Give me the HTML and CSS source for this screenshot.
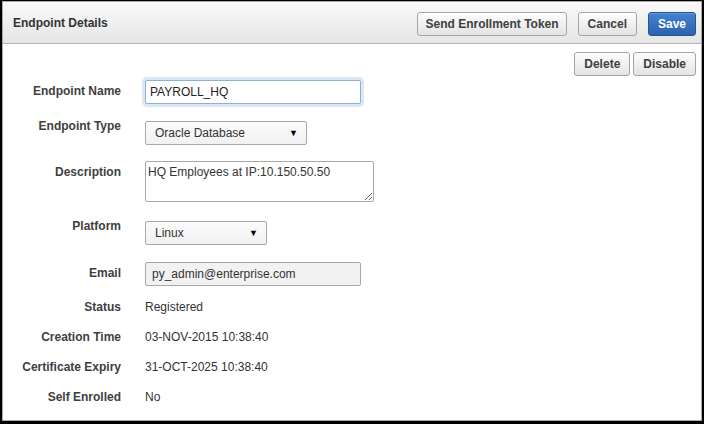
FILE: index.html
```html
<!DOCTYPE html>
<html>
<head>
<meta charset="utf-8">
<link rel="stylesheet" href="styles.css">
</head>
<body>
<div class="panel">
  <div class="header">
    <div class="title">Endpoint Details</div>
    <div class="actions">
      <button class="btn btn-wide">Send Enrollment Token</button>
      <button class="btn">Cancel</button>
      <button class="btn btn-primary">Save</button>
    </div>
  </div>
  <div class="body">
    <div class="toolbar">
      <button class="btn">Delete</button>
      <button class="btn">Disable</button>
    </div>
    <div class="form">
      <div class="row row-name">
        <div class="label label-text">Endpoint Name</div>
        <div class="field"><input class="input input-focus" type="text" value="PAYROLL_HQ"></div>
      </div>
      <div class="row row-type">
        <div class="label label-select">Endpoint Type</div>
        <div class="field"><div class="select select-type"><span>Oracle Database</span><span class="arrow">▼</span></div></div>
      </div>
      <div class="row row-desc">
        <div class="label label-text">Description</div>
        <div class="field"><textarea class="textarea">HQ Employees at IP:10.150.50.50</textarea></div>
      </div>
      <div class="row row-platform">
        <div class="label label-select">Platform</div>
        <div class="field"><div class="select select-platform"><span>Linux</span><span class="arrow">▼</span></div></div>
      </div>
      <div class="row">
        <div class="label label-text">Email</div>
        <div class="field"><input class="input input-readonly" type="text" value="py_admin@enterprise.com"></div>
      </div>
    </div>
    <div class="info">
      <div class="info-row"><div class="label">Status</div><div class="value">Registered</div></div>
      <div class="info-row"><div class="label">Creation Time</div><div class="value">03-NOV-2015 10:38:40</div></div>
      <div class="info-row"><div class="label">Certificate Expiry</div><div class="value">31-OCT-2025 10:38:40</div></div>
      <div class="info-row"><div class="label">Self Enrolled</div><div class="value">No</div></div>
    </div>
  </div>
</div>
</body>
</html>
```
FILE: styles.css
```css
html, body {
  margin: 0;
  padding: 0;
  background: #000;
  height: 424px;
  overflow: hidden;
}
body {
  padding: 1px 2px 3px 2px;
  box-sizing: border-box;
  font-family: "Liberation Sans", Arial, sans-serif;
  font-size: 12px;
  color: #333;
}
.panel {
  height: 420px;
  box-sizing: border-box;
  background: #fff;
  border: 1px solid #a9a9a9;
  display: flex;
  flex-direction: column;
}
.header {
  height: 41px;
  border-bottom: 1px solid #b3b3b3;
  background: linear-gradient(#fafafa, #e5e5e5);
  display: flex;
  align-items: center;
  justify-content: space-between;
  padding: 0 5px 0 10px;
}
.title {
  font-weight: bold;
  color: #333;
  font-size: 12px;
}
.actions {
  display: flex;
  gap: 11px;
  padding-top: 2px;
}
.btn {
  font-family: "Liberation Sans", Arial, sans-serif;
  font-size: 12px;
  font-weight: bold;
  color: #404040;
  height: 24px;
  padding: 0 9px;
  border: 1px solid #a4a4a4;
  border-radius: 3px;
  background: linear-gradient(#fdfdfd, #e3e3e3);
  box-shadow: inset 0 1px 0 #fff;
  margin: 0;
}
.btn-wide {
  padding: 0 7px;
}
.btn-primary {
  color: #fff;
  border-color: #2b5591;
  background: linear-gradient(#4382cf, #2c62ae);
  box-shadow: inset 0 1px 0 #5b95da;
  padding: 0 9px;
}
.body {
  flex: 1;
  padding: 8px 5px 0 0;
}
.toolbar {
  display: flex;
  justify-content: flex-end;
  gap: 3px;
}
.toolbar .btn {
  height: 24px;
  padding: 0 9px;
}
.form {
  display: flex;
  flex-direction: column;
  margin-top: 4px;
}
.row-name { margin-bottom: 17px; }
.row-type { margin-bottom: 16px; }
.row-desc { margin-bottom: 19px; }
.row-platform { margin-bottom: 17px; }
.row, .info-row {
  display: grid;
  grid-template-columns: 118px 1fr;
  column-gap: 24px;
  align-items: start;
}
.label {
  text-align: right;
  font-weight: bold;
  color: #404040;
  line-height: 14px;
}
.label-text { padding-top: 4px; }
.label-select { margin-top: -2px; }
.field { display: flex; }
.input {
  box-sizing: border-box;
  width: 216px;
  height: 24px;
  border: 1px solid #a8a8a8;
  border-radius: 2px;
  padding: 0 4px;
  font-family: "Liberation Sans", Arial, sans-serif;
  font-size: 12px;
  color: #333;
  margin: 0;
  outline: none;
}
.input-focus {
  border-color: #8eafd6;
  box-shadow: 0 0 0 3px #dce7f4;
  color: #222;
}
.input-readonly {
  background: #f2f2f2;
  padding-left: 6px;
}
.select {
  box-sizing: border-box;
  height: 24px;
  border: 1px solid #a8a8a8;
  border-radius: 2px;
  background: linear-gradient(#fbfbfb, #f1f1f1);
  display: flex;
  align-items: center;
  justify-content: space-between;
  padding: 0 8px 0 9px;
  color: #333;
}
.select-type { width: 162px; }
.select-platform { width: 122px; }
.arrow {
  font-size: 9px;
  color: #000;
}
.textarea {
  box-sizing: border-box;
  width: 229px;
  height: 41px;
  border: 1px solid #a8a8a8;
  border-radius: 2px;
  padding: 3px 2px;
  font-family: "Liberation Sans", Arial, sans-serif;
  font-size: 12px;
  color: #333;
  margin: 0;
  resize: both;
  outline: none;
  display: block;
}
.info {
  margin-top: 6px;
}
.info-row {
  height: 30px;
  align-items: center;
}
.info-row .label { line-height: 30px; }
.value {
  color: #333;
  line-height: 30px;
}
```
